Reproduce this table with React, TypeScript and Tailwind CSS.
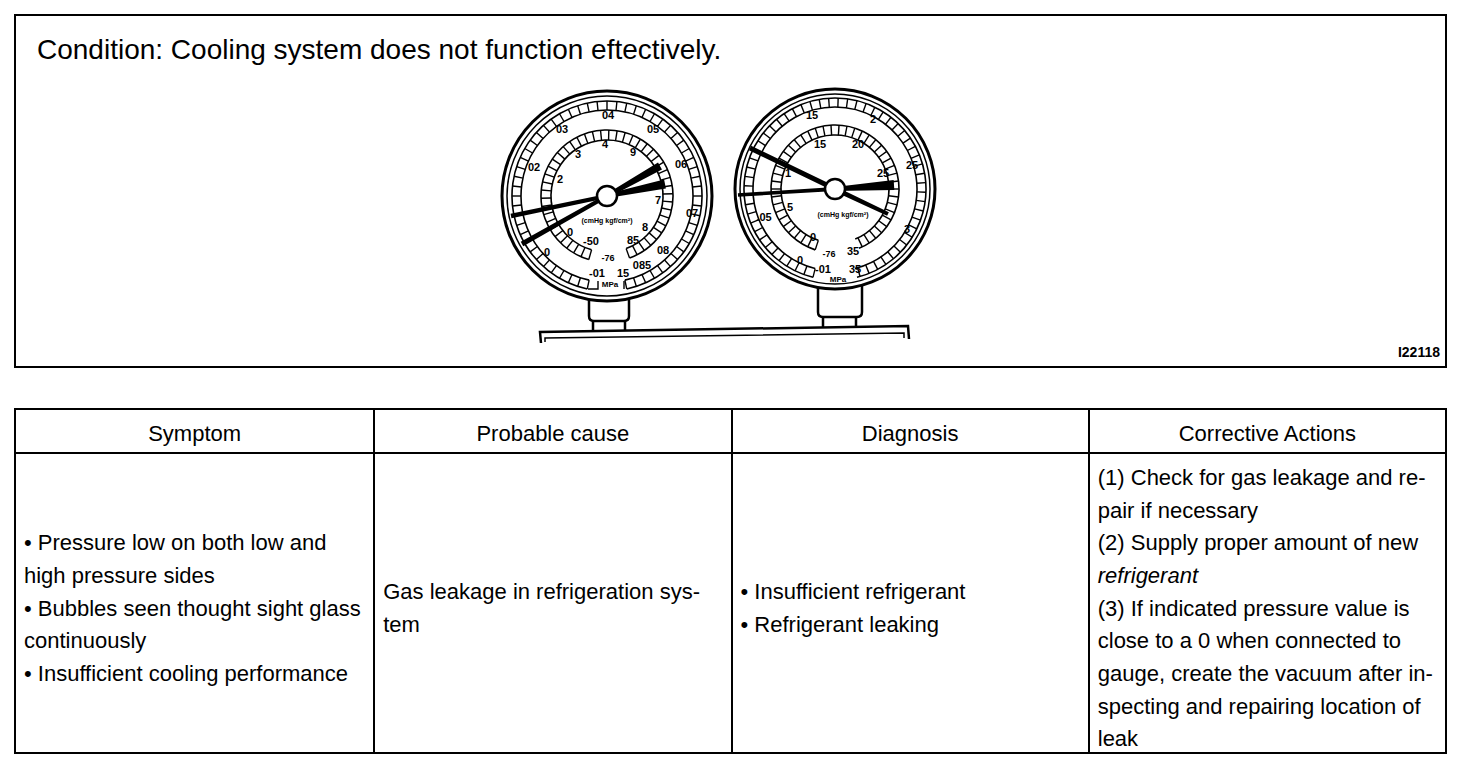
import React from "react";

type P = [number, number];

const pt = (cx: number, cy: number, r: number, deg: number): P => {
  const a = (deg * Math.PI) / 180;
  return [cx + r * Math.sin(a), cy - r * Math.cos(a)];
};

const arcPath = (cx: number, cy: number, r: number, a0: number, a1: number) => {
  const [x0, y0] = pt(cx, cy, r, a0);
  const [x1, y1] = pt(cx, cy, r, a1);
  const span = a1 - a0;
  const large = span > 180 ? 1 : 0;
  return `M${x0} ${y0} A${r} ${r} 0 ${large} 1 ${x1} ${y1}`;
};

function Band({ cx, cy, r0, r1, a0, a1, step }: { cx: number; cy: number; r0: number; r1: number; a0: number; a1: number; step: number }) {
  const ticks: number[] = [];
  for (let a = a0; a <= a1 + 0.01; a += step) ticks.push(a);
  return (
    <g stroke="#000" fill="none">
      <path d={arcPath(cx, cy, r0, a0, a1)} strokeWidth={1.6} />
      <path d={arcPath(cx, cy, r1, a0, a1)} strokeWidth={1.6} />
      {ticks.map((a, i) => {
        const [x0, y0] = pt(cx, cy, r0, a);
        const [x1, y1] = pt(cx, cy, r1, a);
        return <line key={i} x1={x0} y1={y0} x2={x1} y2={y1} strokeWidth={1.4} />;
      })}
    </g>
  );
}

function Needle({ t, h, c, wt, wc, wh }: { t: P; h: P; c: P; wt: number; wc: number; wh: number }) {
  const dx = h[0] - t[0];
  const dy = h[1] - t[1];
  const L = Math.hypot(dx, dy);
  const nx = -dy / L;
  const ny = dx / L;
  const p = (q: P, w: number, s: number) => `${q[0] + (nx * w * s) / 2},${q[1] + (ny * w * s) / 2}`;
  const pts = [p(t, wt, 1), p(c, wc, 1), p(h, wh, 1), p(h, wh, -1), p(c, wc, -1), p(t, wt, -1)].join(" ");
  return <polygon points={pts} fill="#000" />;
}

function Num({ x, y, s, size = 11 }: { x: number; y: number; s: string; size?: number }) {
  return (
    <text x={x} y={y} fontSize={size} fontWeight={700} textAnchor="middle" dominantBaseline="middle" fontFamily="'Liberation Sans', Arial, sans-serif" fill="#000">
      {s}
    </text>
  );
}

function Gauges() {
  const L = { cx: 607, cy: 198 };
  const R = { cx: 835, cy: 191 };
  return (
    <svg width={450} height={272} viewBox="495 80 450 272" className="block shrink-0">
      {/* base bar */}
      <path d="M541 345 L540 334 L908 328 L909 341" fill="none" stroke="#000" strokeWidth={2.5} />
      <path d="M545 344 L545 340 L904 335 L904 340" fill="none" stroke="#000" strokeWidth={1.5} />

      {/* left stem */}
      <path d="M593 322 L593 334 M625 322 L625 333" stroke="#000" strokeWidth={2.5} fill="none" />
      <path d="M589 290 L589 318 Q589 323 594 323 L624 323 Q629 323 629 318 L629 290" stroke="#000" strokeWidth={2.5} fill="#fff" />
      {/* right stem */}
      <path d="M823 318 L823 330 M856 318 L856 329" stroke="#000" strokeWidth={2.5} fill="none" />
      <path d="M818 284 L818 314 Q818 319 823 319 L857 319 Q862 319 862 314 L862 284" stroke="#000" strokeWidth={2.5} fill="#fff" />

      {/* LEFT GAUGE */}
      <circle cx={L.cx} cy={L.cy} r={105} fill="#fff" stroke="#000" strokeWidth={3} />
      <circle cx={L.cx} cy={L.cy} r={100} fill="none" stroke="#000" strokeWidth={1.5} />
      <Band cx={L.cx} cy={L.cy} r0={86} r1={95} a0={192} a1={528} step={6} />
      <Band cx={L.cx} cy={L.cy} r0={56} r1={66} a0={196} a1={520} step={7.2} />
      <path d="M598 283 L598 291 L588 291" fill="none" stroke="#000" strokeWidth={1.4} />
      <path d="M624 283 L624 291" fill="none" stroke="#000" strokeWidth={1.4} />
      <Num x={608} y={118} s="04" />
      <Num x={562} y={132} s="03" />
      <Num x={653} y={132} s="05" />
      <Num x={534} y={170} s="02" />
      <Num x={681} y={167} s="06" />
      <Num x={692} y={216} s="07" />
      <Num x={663} y={253} s="08" />
      <Num x={642} y={268} s="085" />
      <Num x={597} y={276} s="-01" />
      <Num x={623} y={276} s="15" />
      <Num x={610} y={287} s="MPa" size={8} />
      <Num x={547} y={255} s="0" />
      <Num x={605} y={147} s="4" />
      <Num x={578} y={157} s="3" />
      <Num x={633} y={155} s="9" />
      <Num x={560} y={182} s="2" />
      <Num x={658} y={203} s="7" />
      <Num x={645} y={230} s="8" />
      <Num x={570} y={235} s="0" />
      <Num x={591} y={244} s="-50" />
      <Num x={633} y={243} s="85" />
      <Num x={608} y={261} s="-76" size={9} />
      <Num x={607} y={223} s="(cmHg kgf/cm²)" size={7} />
      <Needle t={[511, 218]} c={[607, 198]} h={[665, 186]} wt={4.5} wc={4} wh={9} />
      <Needle t={[522, 246]} c={[607, 198]} h={[660, 168]} wt={5} wc={4} wh={8} />
      <circle cx={L.cx} cy={L.cy} r={10} fill="#fff" stroke="#000" strokeWidth={2.5} />

      {/* RIGHT GAUGE */}
      <circle cx={R.cx} cy={R.cy} r={100} fill="#fff" stroke="#000" strokeWidth={3} />
      <circle cx={R.cx} cy={R.cy} r={95} fill="none" stroke="#000" strokeWidth={1.5} />
      <Band cx={R.cx} cy={R.cy} r0={82} r1={91} a0={194} a1={526} step={6} />
      <Band cx={R.cx} cy={R.cy} r0={54} r1={64} a0={198} a1={518} step={7.2} />
      <Num x={812} y={118} s="15" />
      <Num x={873} y={122} s="2" />
      <Num x={912} y={168} s="25" />
      <Num x={907} y={232} s="3" />
      <Num x={764} y={220} s=".05" />
      <Num x={800} y={263} s="0" />
      <Num x={823} y={272} s="-01" />
      <Num x={855} y={272} s="35" />
      <Num x={838} y={282} s="MPa" size={8} />
      <Num x={820} y={147} s="15" />
      <Num x={858} y={147} s="20" />
      <Num x={883} y={176} s="25" />
      <Num x={790} y={210} s="5" />
      <Num x={813} y={240} s="0" />
      <Num x={829} y={257} s="-76" size={9} />
      <Num x={853} y={254} s="35" />
      <Num x={788} y={176} s="1" />
      <Num x={843} y={217} s="(cmHg kgf/cm²)" size={7} />
      <Needle t={[750, 150]} c={[835, 191]} h={[888, 216]} wt={5} wc={5} wh={4} />
      <Needle t={[738, 197]} c={[835, 191]} h={[894, 187]} wt={3.5} wc={4} wh={10} />
      <circle cx={R.cx} cy={R.cy} r={10} fill="#fff" stroke="#000" strokeWidth={2.5} />
    </svg>
  );
}

const font = "font-['Liberation_Sans',Arial,Helvetica,sans-serif]";

export default function App() {
  return (
    <div className={`bg-white w-[1472px] min-h-[778px] pt-[14px] text-black ${font}`}>
      {/* Illustration box */}
      <div className="ml-[14px] w-[1433px] h-[354px] border-2 border-black flex flex-col">
        <div className="pl-[21px] pt-[18px] text-[28px] leading-[32px] whitespace-nowrap">
          Condition: Cooling system does not function eftectively.
        </div>
        <div className="flex flex-1 mt-[12px]">
          <div className="ml-[479px] self-start">
            <Gauges />
          </div>
          <div className="ml-auto self-end pr-[5px] pb-[6px] text-[14px] font-bold leading-[16px]">I22118</div>
        </div>
      </div>

      {/* Table */}
      <div className="ml-[14px] mt-[40px] w-[1433px] border-2 border-black grid grid-cols-4 text-[22px]">
        {["Symptom", "Probable cause", "Diagnosis", "Corrective Actions"].map((h, i) => (
          <div key={h} className={`h-[44px] pt-[4px] flex items-center justify-center border-b-2 border-black ${i > 0 ? "border-l-2" : ""}`}>
            {h}
          </div>
        ))}
        <div className="h-[298px] flex items-center pl-[8px] pt-[12px] leading-[32.7px] whitespace-nowrap">
          <div>
            <div>• Pressure low on both low and</div>
            <div>high pressure sides</div>
            <div>• Bubbles seen thought sight glass</div>
            <div>continuously</div>
            <div>• Insufficient cooling performance</div>
          </div>
        </div>
        <div className="h-[298px] flex items-center pl-[8px] pt-[12px] border-l-2 border-black leading-[32.7px] whitespace-nowrap">
          <div>
            <div>Gas leakage in refrigeration sys-</div>
            <div>tem</div>
          </div>
        </div>
        <div className="h-[298px] flex items-center pl-[8px] pt-[12px] border-l-2 border-black leading-[32.7px] whitespace-nowrap">
          <div>
            <div>• Insufficient refrigerant</div>
            <div>• Refrigerant leaking</div>
          </div>
        </div>
        <div className="h-[298px] flex items-center pl-[8px] pt-[12px] border-l-2 border-black leading-[32.7px] whitespace-nowrap">
          <div>
            <div>(1) Check for gas leakage and re-</div>
            <div>pair if necessary</div>
            <div>(2) Supply proper amount of new</div>
            <div className="italic">refrigerant</div>
            <div>(3) If indicated pressure value is</div>
            <div>close to a 0 when connected to</div>
            <div>gauge, create the vacuum after in-</div>
            <div>specting and repairing location of</div>
            <div>leak</div>
          </div>
        </div>
      </div>
    </div>
  );
}
